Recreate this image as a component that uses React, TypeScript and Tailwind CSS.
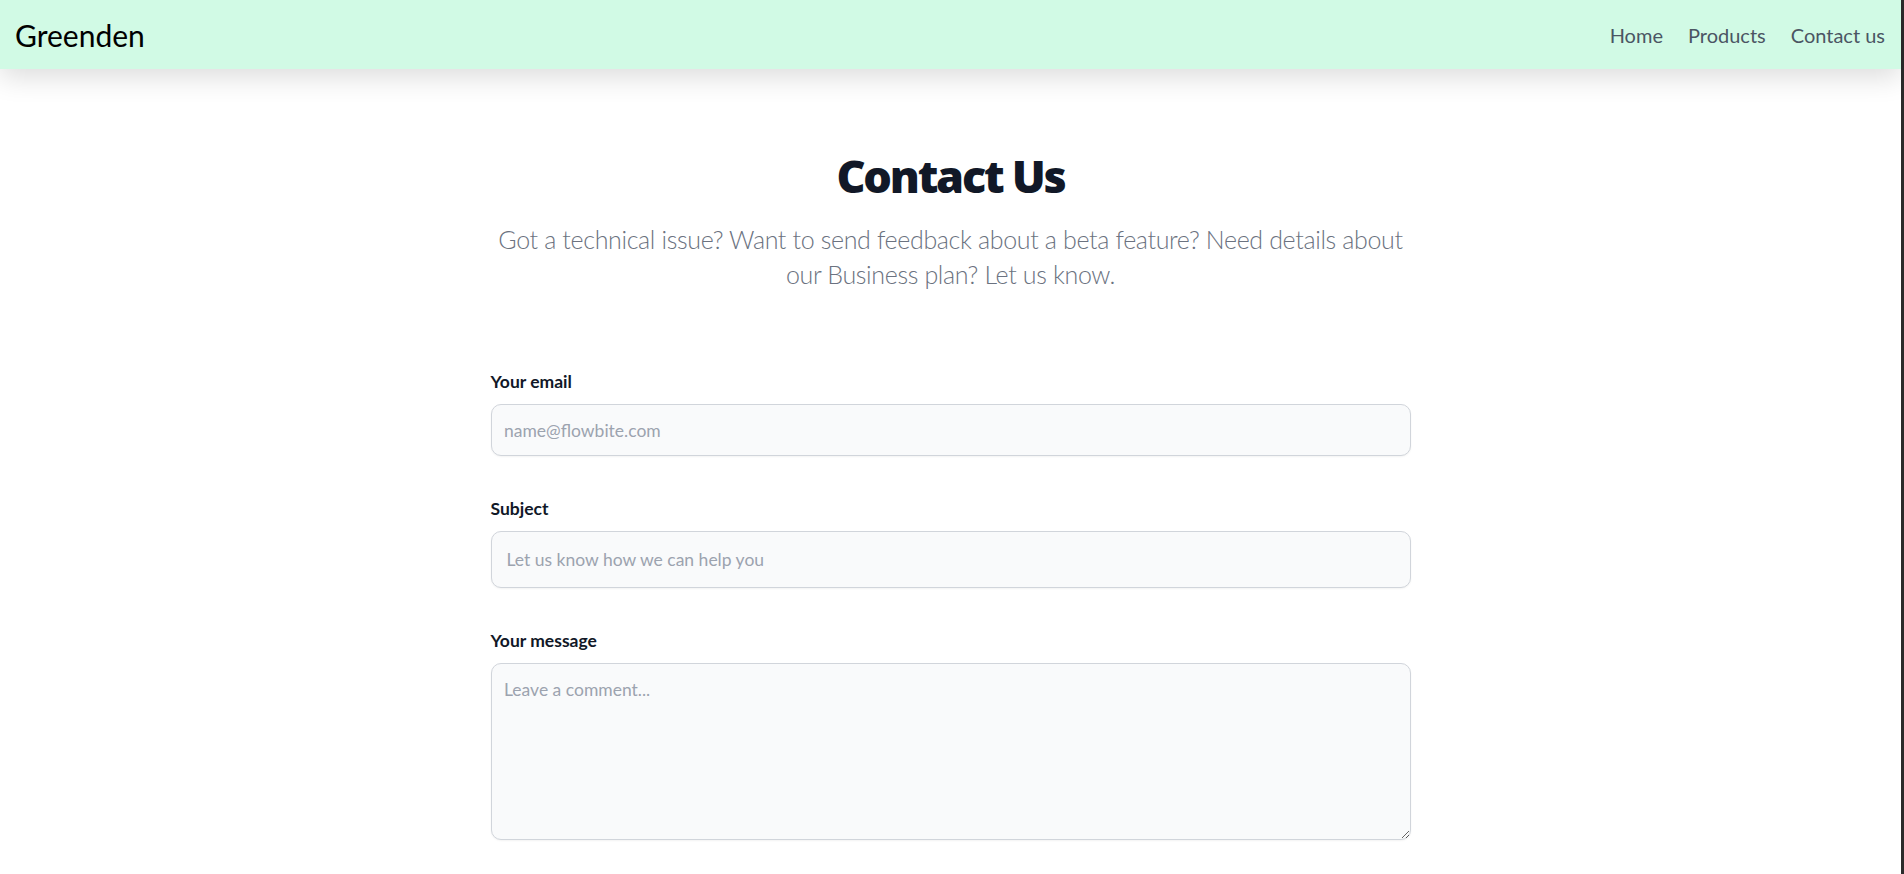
import React from "react";

const font = { fontFamily: 'Lato, "Open Sans", sans-serif' };
const headFont = { fontFamily: '"Open Sans", Lato, sans-serif' };

const Field: React.FC<{ id: string; label: string; children: React.ReactNode }> = ({
  id,
  label,
  children,
}) => {
  return (
    <div>
      <label htmlFor={id} className="block mb-[10px] text-[17.5px] leading-[25px] font-bold text-[#111827]">
        {label}
      </label>
      {children}
    </div>
  );
};

export default function App() {
  return (
    <div className="flex min-h-screen bg-white" style={font}>
      <div className="flex-1 min-w-0">
        <nav className="relative z-10 h-[69px] bg-[#d1fae5] flex items-center justify-between pl-[15px] pr-[16px] shadow-[0_8px_28px_rgba(0,0,0,0.14)]">
          <a href="#" className="text-[30px] leading-[40px] text-black">Greenden</a>
          <ul className="flex gap-[25px] text-[20px] leading-[28px] text-[#4b5563]">
            <li><a href="#">Home</a></li>
            <li><a href="#">Products</a></li>
            <li><a href="#">Contact us</a></li>
          </ul>
        </nav>
        <section className="bg-white">
          <div className="mx-auto max-w-[960px] px-[20px] pt-[82px] pb-[80px]">
            <h2
              className="mb-[21px] text-center text-[45px] leading-[50px] font-extrabold tracking-[-0.05em] text-[#111827]"
              style={headFont}
            >
              Contact Us
            </h2>
            <p className="mb-[77px] text-center text-[25px] leading-[35px] font-light tracking-[-0.35px] text-[#6b7280]">
              Got a technical issue? Want to send feedback about a beta feature? Need details about our Business plan? Let us know.
            </p>
            <form className="flex flex-col gap-[40px]" onSubmit={(e) => e.preventDefault()}>
              <Field id="email" label="Your email">
                <input
                  id="email"
                  type="email"
                  placeholder="name@flowbite.com"
                  className="block w-full p-[12.5px] text-[17.5px] leading-[25px] bg-[#f9fafb] border border-[#d1d5db] rounded-[10px] text-[#111827] placeholder:text-[#9ca3af] shadow-[0_1px_2px_rgba(0,0,0,0.05)] outline-none"
                />
              </Field>
              <Field id="subject" label="Subject">
                <input
                  id="subject"
                  type="text"
                  placeholder="Let us know how we can help you"
                  className="block w-full p-[15px] text-[17.5px] leading-[25px] bg-[#f9fafb] border border-[#d1d5db] rounded-[10px] text-[#111827] placeholder:text-[#9ca3af] shadow-[0_1px_2px_rgba(0,0,0,0.05)] outline-none"
                />
              </Field>
              <Field id="message" label="Your message">
                <textarea
                  id="message"
                  rows={6}
                  placeholder="Leave a comment..."
                  className="block w-full p-[12.5px] text-[17.5px] leading-[25px] bg-[#f9fafb] border border-[#d1d5db] rounded-[10px] text-[#111827] placeholder:text-[#9ca3af] shadow-[0_1px_2px_rgba(0,0,0,0.05)] outline-none"
                />
              </Field>
            </form>
          </div>
        </section>
      </div>
      <div className="w-[3px] shrink-0 bg-[#2b2b2b]" />
    </div>
  );
}
